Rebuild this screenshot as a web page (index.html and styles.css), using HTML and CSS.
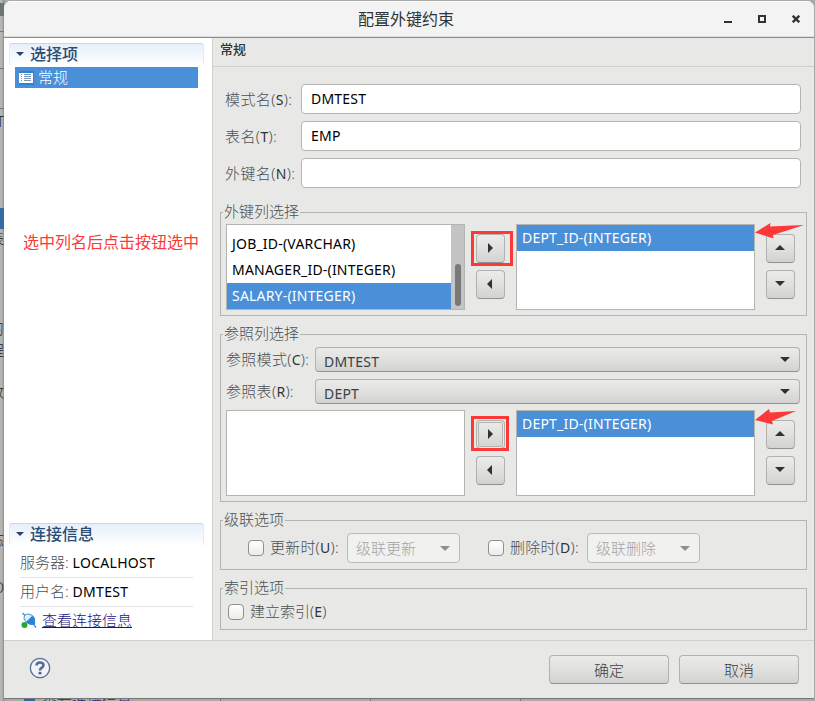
FILE: index.html
```html
<!DOCTYPE html>
<html lang="zh-CN">
<head>
    <meta charset="UTF-8">
    <meta name="viewport" content="width=device-width, initial-scale=1.0">
    <title>配置外键约束</title>
    <link rel="stylesheet" href="styles.css">
</head>
<body>
    <!-- Окно позади диалога -->
    <div class="backdrop">
        <i class="back-icon"></i>
        <i class="back-line l1"></i>
        <i class="back-line l2"></i>
        <i class="back-line l3"></i>
        <i class="back-selected"></i>
        <span class="back-text t1">T</span>
        <span class="back-text t2">表</span>
        <span class="back-text t3">习</span>
        <span class="back-text t4">程</span>
        <span class="back-text t5">改</span>
        <span class="back-text t6">态</span>
        <span class="back-text t7">O</span>
        <i class="back-plug"></i>
        <span class="back-link">查看连接信息</span>
        <i class="back-col c1"></i>
        <i class="back-col c2"></i>
        <i class="back-col c3"></i>
    </div>

    <div class="dialog">
        <div class="titlebar">
            <h1>配置外键约束</h1>
            <div class="window-buttons">
                <svg width="8" height="8" viewBox="0 0 8 8"><path d="M0 7h8" stroke="#2e3436" stroke-width="2"/></svg>
                <svg width="8" height="8" viewBox="0 0 8 8"><path d="M1 1h6v6h-6z" fill="none" stroke="#2e3436" stroke-width="2"/></svg>
                <svg width="8" height="8" viewBox="0 0 8 8"><path d="M.7.7l6.600 6.600M7.300.7L.7 7.300" stroke="#2e3436" stroke-width="2.300"/></svg>
            </div>
        </div>

        <div class="body">
            <div class="sidebar">
                <div class="section-title"><i class="twist"></i>选择项</div>
                <div class="nav-item">
                    <svg width="15" height="14" viewBox="0 0 15 14">
                        <rect width="15" height="14" fill="#2b83d6"/>
                        <rect x="0" y="2" width="14" height="10" fill="#fff"/>
                        <path d="M2 3.500h1M2 5.500h1M2 7.500h1M2 9.500h1M5 3.500h7M5 5.500h7M5 7.500h7M5 9.500h7" stroke="#7d95b5"/>
                    </svg>
                    <span>常规</span>
                </div>
                <div class="note">选中列名后点击按钮选中</div>

                <div class="section-title">
                    <i class="twist"></i>连接信息
                </div>
                <div class="info">服务器: <b>LOCALHOST</b></div>
                <div class="info">用户名: <b>DMTEST</b></div>
                <div class="info link-row">
                    <svg width="16" height="16" viewBox="0 0 16 16">
                        <path d="M1.500 1l3 3M13 13l2 2.500" stroke="#3a8edb" stroke-width="1.300"/>
                        <path d="M3 7Q3 2 7 2Q11 2 13.500 6V12L9.500 12.500Q5 11 3 7z" fill="#e4f0fb" stroke="#3a8edb"/>
                        <path d="M5 10L11.500 3.500Q15 8 14 12.500Q9 14 5 10z" fill="#2b83d6"/>
                        <circle cx="3.500" cy="13" r="3" fill="#23a834"/>
                    </svg>
                    <a href="#">查看连接信息</a>
                </div>
            </div>

            <div class="content">
                <h2>常规</h2>
                <div class="form">
                    <div class="form-row">
                        <label for="schema">模式名(<b>S</b>):</label>
                        <input type="text" id="schema" value="DMTEST">
                    </div>
                    <div class="form-row">
                        <label for="table">表名(<b>T</b>):</label>
                        <input type="text" id="table" value="EMP">
                    </div>
                    <div class="form-row">
                        <label for="fkname">外键名(<b>N</b>):</label>
                        <input type="text" id="fkname">
                    </div>
                </div>

                <!-- Столбцы внешнего ключа -->
                <div class="group fk-group">
                    <span class="legend">外键列选择</span>
                    <div class="picker">
                        <div class="list scrolled">
                            <div class="options">
                                <div class="option">HIRE_DATE-(DATE)</div>
                                <div class="option">JOB_ID-(VARCHAR)</div>
                                <div class="option">MANAGER_ID-(INTEGER)</div>
                                <div class="option selected">SALARY-(INTEGER)</div>
                            </div>
                            <div class="scrollbar"><i></i></div>
                        </div>
                        <div class="arrows">
                            <button class="square"><i class="arrow right"></i></button>
                            <button class="square"><i class="arrow left"></i></button>
                            <span class="mark wide"></span>
                        </div>
                        <div class="list"><div class="options">
                            <div class="option selected">DEPT_ID-(INTEGER)</div>
                        </div></div>
                        <div class="arrows">
                            <button class="square"><i class="arrow up"></i></button>
                            <button class="square"><i class="arrow down"></i></button>
                            <svg class="pointer" width="49" height="16" viewBox="0 0 49 16"><path d="M0 9.500L15.500 0L15 3.500L49 2L18 12L18.500 15.500z" fill="#fd3838"/></svg>
                        </div>
                    </div>
                </div>

                <!-- Столбцы, на которые ссылается ключ -->
                <div class="group ref-group">
                    <span class="legend">参照列选择</span>
                    <div class="combo-row">
                        <label>参照模式(<b>C</b>):</label>
                        <div class="combo">DMTEST<i class="arrow down"></i></div>
                    </div>
                    <div class="combo-row">
                        <label>参照表(<b>R</b>):</label>
                        <div class="combo">DEPT<i class="arrow down"></i></div>
                    </div>
                    <div class="picker">
                        <div class="list"></div>
                        <div class="arrows">
                            <button class="square focused"><i class="arrow right"></i></button>
                            <button class="square"><i class="arrow left"></i></button>
                            <span class="mark"></span>
                        </div>
                        <div class="list"><div class="options">
                            <div class="option selected">DEPT_ID-(INTEGER)</div>
                        </div></div>
                        <div class="arrows">
                            <button class="square"><i class="arrow up"></i></button>
                            <button class="square"><i class="arrow down"></i></button>
                            <svg class="pointer" width="41" height="16" viewBox="0 0 41 16"><path d="M0 11L14 0L15 3.500L41 2L17 12L18 15.500z" fill="#fd3838"/></svg>
                        </div>
                    </div>
                </div>

                <div class="group cascade-group">
                    <span class="legend">级联选项</span>
                    <div class="cascade">
                        <i class="check"></i>
                        <label>更新时(<b>U</b>):</label>
                        <div class="combo disabled">级联更新<i class="arrow down"></i></div>
                    </div>
                    <div class="cascade">
                        <i class="check"></i>
                        <label>删除时(<b>D</b>):</label>
                        <div class="combo disabled">级联删除<i class="arrow down"></i></div>
                    </div>
                </div>

                <div class="group index-group">
                    <span class="legend">索引选项</span>
                    <i class="check"></i>
                    <label>建立索引(<b>E</b>)</label>
                </div>
            </div>
        </div>

        <div class="footer">
            <svg width="22" height="22" viewBox="0 0 22 22">
                <circle cx="11" cy="11" r="9.700" fill="#f1f4f8" stroke="#566d92" stroke-width="1.300"/>
                <path d="M7.500 8.500Q7.500 5.500 11 5.500Q14.500 5.500 14.500 8.300Q14.500 10 12.500 11Q11 11.800 11 13.500" fill="none" stroke="#566d92" stroke-width="2.600"/>
                <rect x="9.500" y="14.800" width="3" height="2.600" fill="#566d92"/>
            </svg>
            <div class="actions">
                <button>确定</button>
                <button>取消</button>
            </div>
        </div>
    </div>
</body>
</html>
```

FILE: styles.css
```css
* {
    box-sizing: border-box;
}
body {
    margin: 0;
    height: 701px;
    padding: 1px 1px 2px 4px;
    position: relative;
    overflow: hidden;
    background-color: #8e8e8d;
    font-family: "Noto Sans", "Noto Sans CJK SC", sans-serif;
    font-size: 15px;
    font-weight: 300;
    color: #4a5053;
}
b {
    font-size: 14px;
    font-weight: 400;
    letter-spacing: 0.3px;
    color: #2e3436;
}
h1, h2 {
    margin: 0;
}

/* background window */
.backdrop {
    position: absolute;
    inset: 0;
    overflow: hidden;
    background: linear-gradient(to right, #b5b5b3 2px, #8a8a88 4px, #aaaaa8 5px);
}
.backdrop > * {
    position: absolute;
}
.back-icon {
    left: 0;
    top: 3px;
    width: 4px;
    height: 13px;
    background-color: #6d7478;
}
.back-line {
    left: 0;
    width: 4px;
    height: 1px;
    background-color: #777;
}
.l1 { top: 31px; }
.l2 { top: 68px; }
.l3 { top: 108px; }
.back-selected {
    left: 0;
    top: 208px;
    width: 4px;
    height: 21px;
    background-color: #356ba5;
}
.back-text {
    right: 811px;
    font-size: 14px;
    line-height: 18px;
    color: #222;
}
.t1 { top: 113px; }
.t2 { top: 230px; }
.t3 { top: 320px; }
.t4 { top: 341px; }
.t5 { top: 383px; }
.t6 { top: 531px; }
.t7 { top: 579px; }
.back-plug {
    left: 24px;
    top: 696px;
    width: 11px;
    height: 8px;
    background-color: #286ba6;
}
.back-link {
    left: 42px;
    top: 692px;
    line-height: 18px;
    color: #2b2780;
}
.back-col {
    top: 698px;
    width: 1px;
    height: 3px;
    background-color: #777;
}
.c1 { left: 220px; }
.c2 { left: 370px; }
.c3 { left: 520px; }

/* dialog */
.dialog {
    position: relative;
    height: 698px;
    display: flex;
    flex-direction: column;
    border-bottom: 1px solid #777;
    border-radius: 7px 7px 0 0;
    background-color: #e8e8e6;
    overflow: hidden;
}
.titlebar {
    height: 37px;
    flex: none;
    display: flex;
    align-items: center;
    padding-right: 14px;
    background-color: #f3f3f3;
    border-bottom: 1px solid #8b8c8b;
    box-shadow: inset 0 1px #fff, inset 0 -1px #ddd;
}
.titlebar h1 {
    flex: 1;
    padding: 0 0 2px 84px;
    text-align: center;
    font-size: 16px;
    font-weight: 400;
    color: #2e3436;
}
.window-buttons {
    display: flex;
    gap: 26px;
}
.body {
    flex: 1;
    display: flex;
    min-height: 0;
}
.sidebar {
    width: 209px;
    padding: 5px 8px 0 5px;
    display: flex;
    flex-direction: column;
    background-color: #fff;
    border-right: 1px solid #cfcfcd;
}
.section-title {
    height: 22px;
    display: flex;
    align-items: center;
    gap: 6px;
    padding: 0 0 4px 7px;
    border-top: 1px solid #c5d8ee;
    border-radius: 3px;
    background: linear-gradient(#e7effa, #fff);
    box-shadow: inset 1px 0 #e3ecf7, inset -1px 0 #e3ecf7;
    font-size: 16px;
    font-weight: 500;
    color: #2c4d75;
}
.twist {
    margin-top: 2px;
    border: 4px solid transparent;
    border-top-color: #23456e;
    border-bottom: 0;
}
.nav-item {
    height: 21px;
    margin: 2px 6px 0;
    padding-left: 4px;
    display: flex;
    align-items: center;
    gap: 4px;
    background-color: #4a90d9;
    color: #fff;
}
.nav-item span {
    padding-bottom: 2px;
}
.note {
    flex: 1;
    padding: 141px 0 0 14px;
    font-family: "Noto Sans CJK SC", sans-serif;
    font-size: 16px;
    font-weight: 400;
    color: #fd3838;
    white-space: nowrap;
}
.info {
    height: 29px;
    margin: 0 11px;
    line-height: 27px;
    border-bottom: 1px solid #e3e3e3;
    white-space: nowrap;
}
.section-title + .info {
    height: 33px;
    line-height: 35px;
}
.info b {
    color: #000;
}
.link-row {
    height: 33px;
    padding-left: 1px;
    display: flex;
    gap: 5px;
    border: 0;
}
.link-row svg {
    margin-top: 5px;
}
.info a {
    color: #1a1482;
}

.content {
    flex: 1;
}
.content h2 {
    height: 29px;
    padding-left: 7px;
    border-bottom: 1px solid #cfcfcd;
    font-size: 13px;
    line-height: 22px;
    font-weight: 500;
    color: #2e3436;
}
.form {
    padding: 17px 13px 0 12px;
    display: flex;
    flex-direction: column;
    gap: 7px;
}
.form-row {
    display: flex;
    align-items: center;
}
.form-row label {
    width: 76px;
    padding-bottom: 2px;
    letter-spacing: 0.4px;
    white-space: nowrap;
}
.form-row input {
    flex: 1;
    height: 30px;
    padding: 0 9px 2px;
    border: 1px solid #b4b4b0;
    border-radius: 4px;
    background-color: #fff;
    font: 400 14px "Noto Sans", sans-serif;
    letter-spacing: 0.2px;
    color: #000;
}
.group {
    position: relative;
    margin: 0 7px;
    border: 1px solid #b4b4b0;
}
.legend {
    position: absolute;
    left: 2px;
    top: -12px;
    padding: 0 1px;
    line-height: 20px;
    background-color: #e8e8e6;
}
.fk-group {
    height: 104px;
    margin-top: 24px;
    padding: 11px 0 0 5px;
}
.picker {
    display: flex;
}
.list {
    width: 239px;
    height: 86px;
    display: flex;
    border: 1px solid #b4b4b0;
    background-color: #fff;
    overflow: hidden;
}
.options {
    flex: 1;
}
.scrolled .options {
    margin-top: -20px;
}
.option {
    height: 26px;
    padding-left: 5px;
    line-height: 26px;
    font-size: 14px;
    font-weight: 400;
    letter-spacing: 0.2px;
    color: #000;
}
.scrolled .option:first-child {
    line-height: 24px;
}
.option.selected {
    background-color: #4a90d9;
    color: #fff;
}
.scrollbar {
    width: 13px;
    background-color: #c3c4c3;
    padding: 39px 0 0 4px;
}
.scrollbar i {
    display: block;
    width: 6px;
    height: 42px;
    border-radius: 3px;
    background-color: #777a79;
}
.arrows {
    position: relative;
    width: 51px;
    padding: 10px 0 0 11px;
    display: flex;
    flex-direction: column;
    gap: 7px;
}
button, .combo {
    border: 1px solid #b1b1ae;
    border-bottom-color: #90908e;
    border-radius: 4px;
    background: linear-gradient(#ebebea, #e0e0df 50%, #d2d2d0);
    font: inherit;
    color: #3a4043;
}
.square {
    width: 29px;
    height: 29px;
    padding: 0 1px 2px 0;
    display: flex;
    align-items: center;
    justify-content: center;
}
.focused {
    box-shadow: inset 0 0 0 1px #e8e8e6, inset 0 0 0 2px #b4b4b0;
}
.arrow {
    border: 5px solid transparent;
    color: #2e3436;
}
.right {
    border-left-color: currentColor;
    border-right: 0;
}
.left {
    margin-right: 2px;
    border-right-color: currentColor;
    border-left: 0;
}
.up {
    border-bottom-color: currentColor;
    border-top: 0;
}
.down {
    border-top-color: currentColor;
    border-bottom: 0;
}
.mark {
    position: absolute;
    left: 6px;
    top: 6px;
    width: 38px;
    height: 35px;
    border: 3px solid #fd3838;
}
.mark.wide {
    top: 7px;
    width: 42px;
}
.pointer {
    position: absolute;
    left: 0;
    top: -1px;
}

.ref-group {
    height: 168px;
    margin-top: 18px;
    padding: 12px 0 0 5px;
}
.combo-row {
    height: 32px;
    display: flex;
}
.combo-row label {
    width: 89px;
    line-height: 24px;
    letter-spacing: 0.3px;
    white-space: nowrap;
}
.combo {
    height: 25px;
    padding: 3px 9px 0 8px;
    display: flex;
    align-items: center;
    justify-content: space-between;
}
.combo-row .combo {
    width: 485px;
    font-size: 14px;
    font-weight: 400;
    letter-spacing: 0.2px;
}
.combo .arrow {
    margin-top: -4px;
}
.ref-group .picker {
    margin-top: -1px;
}
.cascade-group {
    height: 50px;
    margin-top: 18px;
    padding: 12px 0 0 27px;
    display: flex;
    gap: 27px;
}
.cascade {
    width: 213px;
    display: flex;
}
.cascade label {
    width: 77px;
    line-height: 29px;
    letter-spacing: 0.2px;
    white-space: nowrap;
}
.combo.disabled {
    width: 113px;
    height: 30px;
    padding: 0 9px 1px 8px;
    border-color: #b9b9b6;
    background: #f1f1f0;
    color: #a3a5a5;
}
.disabled .arrow {
    margin: 1px 0 0;
    color: #8d9091;
}
.check {
    flex: none;
    width: 16px;
    height: 16px;
    margin: 7px 6px 0 0;
    border: 1px solid #8f8f8b;
    border-radius: 4px;
    background: linear-gradient(#fff, #ebebea);
}
.index-group {
    height: 42px;
    margin-top: 18px;
    padding: 8px 0 0 7px;
    display: flex;
}
.index-group label {
    line-height: 29px;
}

.footer {
    height: 58px;
    flex: none;
    padding: 0 15px 0 25px;
    display: flex;
    align-items: center;
    justify-content: space-between;
    border-top: 1px solid #cfcfcd;
}
.footer svg {
    margin-top: -3px;
}
.actions {
    display: flex;
    gap: 10px;
}
.actions button {
    width: 120px;
    height: 29px;
    padding: 0 0 1px;
}
```
